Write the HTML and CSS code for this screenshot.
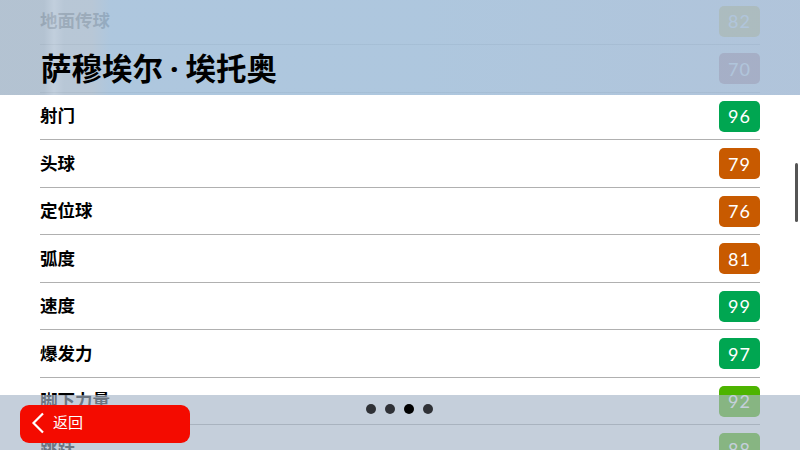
FILE: index.html
```html
<!DOCTYPE html>
<html lang="zh">
<head>
  <meta charset="UTF-8" />
  <meta name="viewport" content="width=device-width, initial-scale=1.0"/>
  <title>萨穆埃尔·埃托奥</title>
  <link rel="stylesheet" href="styles.css">
</head>
<body>
  <div class="stats">
    <div class="row"><span class="name">地面传球</span><span class="score amber">82</span></div>
    <div class="row"><span class="name"></span><span class="score red">70</span></div>
    <div class="row"><span class="name">射门</span><span class="score green">96</span></div>
    <div class="row"><span class="name">头球</span><span class="score orange">79</span></div>
    <div class="row"><span class="name">定位球</span><span class="score orange">76</span></div>
    <div class="row"><span class="name">弧度</span><span class="score orange">81</span></div>
    <div class="row"><span class="name">速度</span><span class="score green">99</span></div>
    <div class="row"><span class="name">爆发力</span><span class="score green">97</span></div>
    <div class="row"><span class="name">脚下力量</span><span class="score lime">92</span></div>
    <div class="row"><span class="name">跳跃</span><span class="score lime">88</span></div>
  </div>

  <div class="scrollbar"></div>

  <div class="header">
    <h1>萨穆埃尔<span class="sep">·</span>埃托奥</h1>
  </div>

  <div class="footer">
    <button class="back">
      <svg class="back-icon" viewBox="0 0 14 22" width="14" height="22">
        <path d="M12 1.5 L2.5 11 L12 20.5" fill="none" stroke="#fff" stroke-width="2.2"/>
      </svg>
      <span class="back-text">返回</span>
    </button>
    <div class="dots">
      <span class="dot"></span>
      <span class="dot"></span>
      <span class="dot active"></span>
      <span class="dot"></span>
    </div>
  </div>
</body>
</html>
```

FILE: styles.css
```css
* {
  box-sizing: border-box;
}

html, body {
  height: 100%;
}

body {
  margin: 0;
  background: #fff;
  color: #000;
  font-family: "Noto Sans CJK SC", "Noto Sans", sans-serif;
  overflow: hidden;
  position: relative;
}

/* Список характеристик */
.stats {
  margin: -2.5px 40px 0;
}

.row {
  height: 47.5px;
  padding-top: 1px;
  display: flex;
  align-items: center;
  justify-content: space-between;
  border-bottom: 1px solid #b0b0b0;
}

.name {
  font-size: 17.5px;
  line-height: 24px;
  margin-bottom: 2px;
  font-weight: 700;
}

.score {
  width: 41px;
  height: 31px;
  border-radius: 5px;
  color: #fff;
  font-family: Lato, sans-serif;
  font-size: 18px;
  letter-spacing: 1px;
  display: flex;
  align-items: center;
  justify-content: center;
}

.green { background: #00a651; }
.amber { background: #d8af00; }
.red { background: #9e3a43; }
.lime { background: #4db400; }
.orange { background: #c85a00; }

.scrollbar {
  position: absolute;
  right: 2px;
  top: 163px;
  width: 3px;
  height: 59px;
  border-radius: 2px;
  background: #555;
}

.header {
  position: absolute;
  top: 0;
  left: 0;
  right: 0;
  height: 95px;
  padding: 47px 0 0 41px;
  background: linear-gradient(90deg, rgba(170, 187, 204, 0.89) 0, rgba(170, 187, 204, 0.89) 44px, rgba(186, 201, 217, 0.89) 54px, rgba(175, 192, 209, 0.89) 64px, rgba(175, 192, 209, 0.89) 92px, rgba(164, 192, 218, 0.89) 110px, rgba(164, 192, 218, 0.89) 420px, rgba(167, 189, 214, 0.89) 100%);
}

h1 {
  margin: 0;
  font-size: 30.5px;
  line-height: 40px;
  font-weight: 700;
}

.sep {
  font-family: "Noto Sans", sans-serif;
  margin: 0 7px;
}

.footer {
  position: absolute;
  left: 0;
  right: 0;
  bottom: 0;
  height: 55px;
  padding-left: 20px;
  display: flex;
  align-items: flex-start;
  background: rgba(166, 182, 200, 0.65);
}

.back {
  width: 170px;
  height: 38.5px;
  margin-top: 9.5px;
  padding: 0 0 0 11px;
  border: none;
  border-radius: 9px;
  background: #f40b00;
  color: #fff;
  font-family: inherit;
  font-size: 15px;
  display: flex;
  align-items: center;
  gap: 8px;
}

.back-text {
  margin-bottom: 4px;
}

.back-icon {
  margin-bottom: 2px;
}

.dots {
  margin: 9px 0 0 176px;
  display: flex;
  gap: 9px;
}

.dot {
  width: 10px;
  height: 10px;
  border-radius: 50%;
  background: #2f3136;
}

.dot.active {
  background: #000;
}
```
